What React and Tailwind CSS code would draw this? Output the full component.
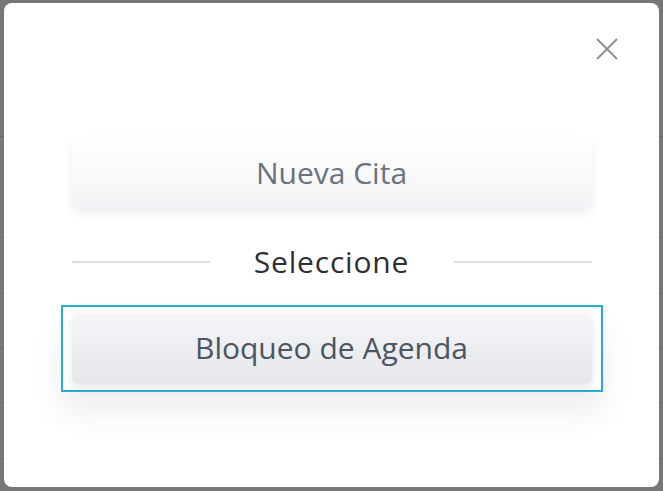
export default function App() {
  const rows = [136, 237, 293, 347, 402, 458]

  return (
    <div className="relative w-[663px] h-[491px] bg-[#777777] overflow-hidden" style={{ fontFamily: '"Open Sans", Lato, sans-serif' }}>
      {rows.map((y) => (
        <div key={y} className="absolute left-0 right-0 h-px bg-[#6a6a6a]" style={{ top: y }} />
      ))}

      <div className="absolute left-[4px] top-[3px] w-[655px] h-[484px] bg-white rounded-[8px]">
        <button className="absolute left-[592px] top-[35px] text-[#8b8b92]">
          <svg width="22" height="22" viewBox="0 0 22 22" fill="none" stroke="currentColor" strokeWidth="1.8">
            <path d="M1 1L21 21M21 1L1 21" />
          </svg>
        </button>

        <div className="flex flex-col items-center pt-[136px] px-[56px]">
          <button className="w-[520px] h-[70px] pb-[3px] rounded-[6px] bg-gradient-to-b from-white to-[#f2f3f6] shadow-[0_3px_10px_rgba(0,0,0,0.08)] text-[30px] text-[#6b7280]">
            Nueva Cita
          </button>

          <div className="w-[520px] flex items-center mt-[38px] h-[30px]">
            <div className="w-[138px] h-[2px] bg-[#dcdce2]" />
            <div className="flex-1 text-center text-[30px] tracking-[0.8px] text-[#2f2f33] leading-none pb-[1px]">Seleccione</div>
            <div className="w-[138px] h-[2px] bg-[#dcdce2]" />
          </div>

          <div className="mt-[28px] w-[542px] h-[87px] border-2 border-[#27afd2] flex items-center justify-center shadow-[0_20px_32px_rgba(0,0,0,0.07)]">
            <button className="w-[520px] h-[70px] pb-[3px] rounded-[6px] bg-gradient-to-b from-[#f5f6f8] to-[#e4e6ea] shadow-[0_3px_8px_rgba(0,0,0,0.10)] text-[30px] text-[#4b5563]">
              Bloqueo de Agenda
            </button>
          </div>
        </div>
      </div>
    </div>
  )
}
